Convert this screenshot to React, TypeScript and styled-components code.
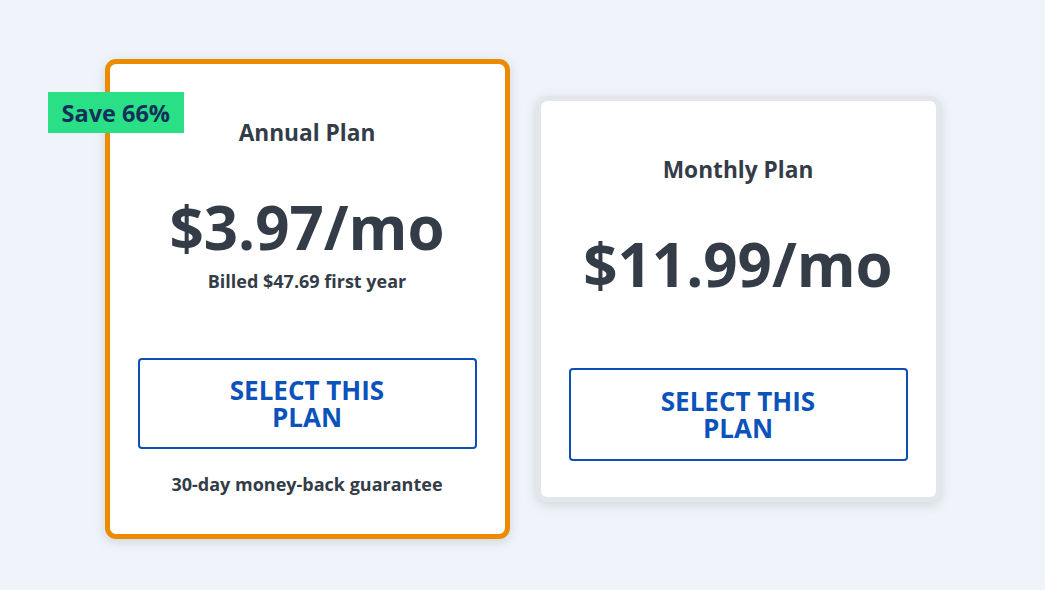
import React from "react";
import styled, { createGlobalStyle } from "styled-components";

const Global = createGlobalStyle`
  html, body { margin: 0; padding: 0; background: #f0f4fa; }
  body { font-family: "Open Sans", "Liberation Sans", sans-serif; }
  * { box-sizing: border-box; }
`;

const Page = styled.div`
  height: 590px;
  padding-top: 8px;
  display: flex;
  align-items: center;
  justify-content: center;
  gap: 26px;
  background: #f0f4fa;
`;

const Card = styled.div<{ $featured?: boolean }>`
  position: relative;
  width: 405px;
  background: #ffffff;
  border: 5px solid ${(p) => (p.$featured ? "#eb8c00" : "#e3e7ec")};
  border-radius: 11px;
  box-shadow: 0 3px 12px rgba(40, 55, 80, 0.16);
  padding: ${(p) => (p.$featured ? "54px 28px 38px" : "54px 28px 36px")};
  display: flex;
  flex-direction: column;
  align-items: center;
  text-align: center;
  color: #333c47;
`;

const Badge = styled.div`
  position: absolute;
  left: -62px;
  top: 28px;
  height: 41px;
  padding: 0 14px 0 14px;
  display: flex;
  align-items: center;
  background: #2ae086;
  color: #13305a;
  font-size: 23.5px;
  font-weight: 700;
`;

const PlanName = styled.h2`
  margin: 0;
  font-size: 22.7px;
  line-height: 30px;
  font-weight: 700;
`;

const Price = styled.div`
  margin-top: 42px;
  font-size: 60px;
  line-height: 74px;
  font-weight: 700;
`;

const Billed = styled.div`
  margin-top: 5px;
  font-size: 18px;
  line-height: 24px;
  font-weight: 700;
`;

const SelectButton = styled.button<{ $gap: number; $height: number }>`
  margin-top: ${(p) => p.$gap}px;
  width: 100%;
  height: ${(p) => p.$height}px;
  padding: 0 60px;
  background: #ffffff;
  border: 2px solid #0d50b5;
  border-radius: 4px;
  color: #0b52ba;
  font-family: "Open Sans", "Liberation Sans", sans-serif;
  font-size: 26px;
  line-height: 27px;
  font-weight: 700;
  text-transform: uppercase;
  cursor: pointer;
`;

const Guarantee = styled.div`
  margin-top: 23px;
  font-size: 18px;
  line-height: 24px;
  font-weight: 700;
`;

export default function App() {
  return (
    <>
      <Global />
      <Page>
        <Card $featured>
          <Badge>Save 66%</Badge>
          <PlanName>Annual Plan</PlanName>
          <Price>$3.97/mo</Price>
          <Billed>Billed $47.69 first year</Billed>
          <SelectButton $gap={65} $height={91}>Select this plan</SelectButton>
          <Guarantee>30-day money-back guarantee</Guarantee>
        </Card>
        <Card>
          <PlanName>Monthly Plan</PlanName>
          <Price>$11.99/mo</Price>
          <SelectButton $gap={67} $height={93}>Select this plan</SelectButton>
        </Card>
      </Page>
    </>
  );
}
